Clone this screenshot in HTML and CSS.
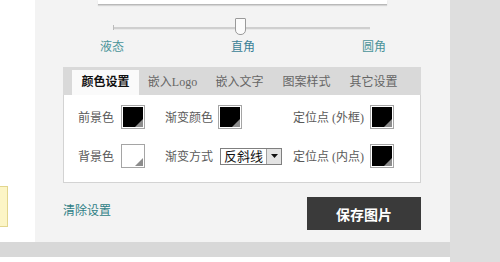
FILE: index.html
```html
<!DOCTYPE html>
<html lang="zh">
<head>
<meta charset="utf-8">
<title>颜色设置</title>
<link rel="stylesheet" href="styles.css">
</head>
<body>
<div class="screen">
  <div class="main-col">
    <div class="top-area">
      <div class="side">
        <div class="note"></div>
      </div>
      <div class="panel">
        <div class="preview"></div>
        <div class="slider"><span class="handle"></span></div>
        <div class="slider-labels">
          <span>液态</span><span class="cur">直角</span><span>圆角</span>
        </div>
        <div class="tabs-box">
          <div class="tabbar">
            <span class="tab active">颜色设置</span>
            <span class="tab">嵌入Logo</span>
            <span class="tab">嵌入文字</span>
            <span class="tab">图案样式</span>
            <span class="tab">其它设置</span>
          </div>
          <div class="tab-content">
            <span class="lbl">前景色</span>
            <span class="swatch"><i class="fill black"></i></span>
            <span class="lbl">渐变颜色</span>
            <span class="swatch"><i class="fill black"></i></span>
            <span class="lbl right">定位点 (外框)</span>
            <span class="swatch"><i class="fill black"></i></span>

            <span class="lbl">背景色</span>
            <span class="swatch"><i class="fill white"></i></span>
            <span class="lbl">渐变方式</span>
            <span class="select"><span class="sel-text">反斜线</span><span class="sel-btn"><svg width="7" height="4" viewBox="0 0 7 4"><path d="M0 0H7L3.5 4Z" fill="#111"/></svg></span></span>
            <span class="lbl right">定位点 (内点)</span>
            <span class="swatch"><i class="fill black"></i></span>
          </div>
        </div>
        <div class="footer">
          <a class="clear">清除设置</a>
          <button class="save">保存图片</button>
        </div>
      </div>
    </div>
    <div class="band"></div>
  </div>
  <div class="right-col"></div>
</div>
</body>
</html>
```
FILE: styles.css
```css
* { box-sizing: border-box; }
html, body { margin: 0; padding: 0; }
body {
  width: 500px;
  height: 262px;
  overflow: hidden;
  background: #fff;
  font-family: "Liberation Serif", "Noto Sans CJK SC", serif;
  font-size: 12px;
  color: #555;
}
.screen { display: flex; height: 262px; }
.main-col { width: 450px; display: flex; flex-direction: column; }
.right-col { width: 50px; background: #dedede; }
.top-area { display: flex; height: 242px; }
.band { height: 15px; background: #d8d8d8; }
.side { width: 35px; background: #fff; padding-top: 186px; }
.note {
  width: 8px;
  height: 41px;
  background: #fcf5c6;
  border: 1px solid #e2d68e;
  border-left: none;
}
.panel {
  width: 415px;
  background: #f3f3f3;
  padding: 0 29px 0 28px;
  display: flex;
  flex-direction: column;
}
.preview {
  margin-left: 35px;
  width: 289px;
  height: 5px;
  background: #fff;
  border-bottom: 1px solid #b9b9b9;
  box-shadow: 0 1px 1px rgba(0,0,0,0.12);
}
.slider {
  position: relative;
  margin: 13px 0 0 50px;
  width: 257px;
  height: 17px;
}
.slider::before {
  content: "";
  position: absolute;
  left: 0; right: 0; top: 9px;
  height: 2px;
  background: #cfcfcf;
  border-bottom: 1px solid #e9e9e9;
}
.slider::after {
  content: "";
  position: absolute;
  left: 0; top: 7px;
  width: 1px; height: 5px;
  background: #bbb;
}
.handle {
  position: absolute;
  left: 122px; top: 0;
  width: 11px; height: 17px;
  background: #fbfbfb;
  border: 1px solid #9a9a9a;
  border-radius: 1px 1px 5px 5px;
}
.slider-labels {
  margin: 5px 0 0 37px;
  width: 286px;
  height: 14px;
  line-height: 14px;
  display: flex;
  justify-content: space-between;
  color: #4a9399;
}
.slider-labels .cur { color: #3a7f96; }
.tabs-box { margin-top: 13px; width: 358px; }
.tabbar {
  height: 28px;
  background: #d9d9d9;
  padding: 3px 0 0 9px;
  display: flex;
}
.tab {
  width: 67px;
  height: 25px;
  line-height: 25px;
  text-align: center;
  color: #666;
}
.tab.active { background: #fafafa; color: #111; font-weight: bold; }
.tab-content {
  height: 88px;
  background: #fff;
  border: 1px solid #d3d3d3;
  border-top: none;
  padding: 10px 0 0 14px;
  display: grid;
  grid-template-columns: 43px 44px 53px 75px 77px 24px;
  grid-template-rows: 24px 24px;
  row-gap: 15px;
  align-items: center;
}
.lbl { color: #5a5a5a; white-space: nowrap; }
.lbl.right { text-align: right; padding-right: 7px; }
.swatch {
  width: 24px; height: 24px;
  border: 1px solid #a5a5a5;
  padding: 1px;
  background: #fff;
  display: block;
}
.fill {
  display: block;
  width: 20px; height: 20px;
  position: relative;
  overflow: hidden;
}
.fill.black { background: #000; }
.fill.white { background: #fff; }
.fill::after {
  content: "";
  position: absolute;
  right: 0; bottom: 0;
  width: 0; height: 0;
  border-left: 8px solid transparent;
  border-bottom: 8px solid #8c8c8c;
}
.select {
  margin-left: 2px;
  width: 62px; height: 17px;
  border: 1px solid #7f7f7f;
  display: flex;
  background: #fff;
}
.sel-text {
  flex: 1;
  font-size: 13px;
  line-height: 15px;
  color: #111;
  padding-left: 3px;
  white-space: nowrap;
}
.sel-btn {
  width: 15px;
  height: 15px;
  background: #e3e3e3;
  border-left: 1px solid #a0a0a0;
  display: flex;
  align-items: center;
  justify-content: center;
}
.footer {
  margin-top: 14px;
  display: flex;
  justify-content: space-between;
  align-items: flex-start;
}
.clear { margin-top: 7px; color: #2f7f86; line-height: 14px; }
.save {
  width: 114px; height: 33px;
  background: #3a3a3a;
  color: #fff;
  border: none;
  font-family: "Noto Sans CJK SC", sans-serif;
  font-size: 14px;
  font-weight: bold;
  padding: 0;
}
```
